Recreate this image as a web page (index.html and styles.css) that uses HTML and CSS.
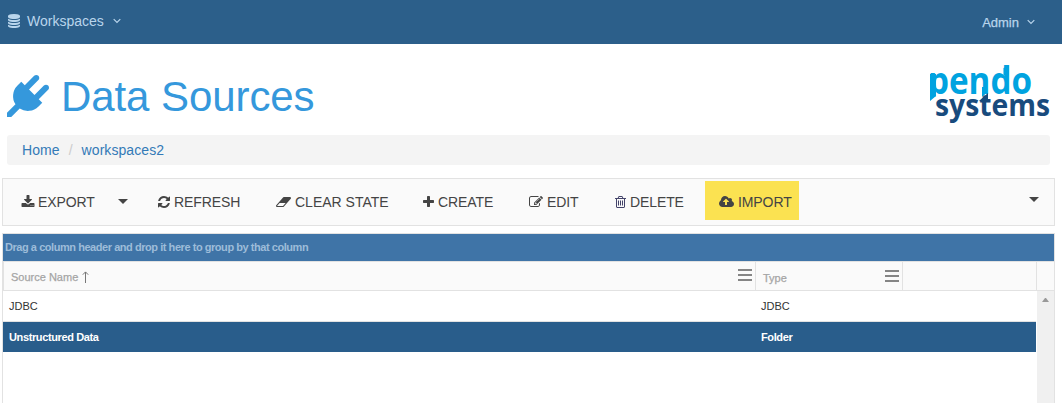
FILE: index.html
```html
<!DOCTYPE html>
<html lang="en">
<head>
<meta charset="utf-8">
<title>Data Sources</title>
<link rel="stylesheet" href="styles.css">
</head>
<body>
<nav class="navbar">
  <div class="nav-item">
    <svg class="nav-db" viewBox="128 0 1536 1792"><path d="M896 768q237 0 443-43t325-127v170q0 69-103 128t-280 93.500-385 34.500-385-34.500-280-93.500-103-128v-170q119 84 325 127t443 43zm0 768q237 0 443-43t325-127v170q0 69-103 128t-280 93.500-385 34.500-385-34.500-280-93.500-103-128v-170q119 84 325 127t443 43zm0-384q237 0 443-43t325-127v170q0 69-103 128t-280 93.500-385 34.500-385-34.500-280-93.500-103-128v-170q119 84 325 127t443 43zm0-1152q208 0 385 34.500t280 93.500 103 128v128q0 69-103 128t-280 93.500-385 34.500-385-34.500-280-93.500-103-128v-128q0-69 103-128t280-93.500 385-34.500z"/></svg>
    <span class="nav-label">Workspaces</span>
    <svg class="chevron" viewBox="0 0 8 6"><path d="M.7 1.200 4 4.500 7.300 1.200"/></svg>
  </div>
  <div class="nav-item nav-user">
    <span class="user-label">Admin</span>
    <svg class="chevron" viewBox="0 0 8 6"><path d="M.7 1.200 4 4.500 7.300 1.200"/></svg>
  </div>
</nav>
<header class="page-head">
  <h1 class="title">
    <svg class="plug" viewBox="0 0 1792 1792"><path d="M1755 453q37 38 37 90.500t-37 90.500l-401 400 150 150-160 160q-163 163-389.500 186.500t-411.500-100.500l-362 362h-181v-181l362-362q-124-185-100.500-411.500t186.500-389.500l160-160 150 150 400-401q38-37 91-37t90 37 37 90.500-37 90.500l-400 401 234 234 401-400q38-37 91-37t90 37z"/></svg>
    <span>Data Sources</span>
  </h1>
  <svg class="logo" viewBox="0 0 122 60" role="img" aria-label="pendo systems">
    <path class="logo-light" d="M1 9h6v22l-6 5zM74.500 3l5.500-2.500v10h-5.500zM53 22h4.500v6l-4.500 4z"/>
    <text class="logo-light logo-pendo" x="-1" y="28.500" textLength="104" lengthAdjust="spacingAndGlyphs">pendo</text>
    <text class="logo-dark logo-systems" x="6" y="51" textLength="115" lengthAdjust="spacingAndGlyphs">systems</text>
    <path class="logo-dark" d="M50 36l9-8v8z"/>
  </svg>
</header>
<div class="breadcrumb"><a>Home</a><span class="slash">/</span><a>workspaces2</a></div>
<div class="toolbar">
  <div class="tool export"><svg class="ico" viewBox="0 0 1792 1792"><path d="M1344 1344q0-26-19-45t-45-19-45 19-19 45 19 45 45 19 45-19 19-45zm256 0q0-26-19-45t-45-19-45 19-19 45 19 45 45 19 45-19 19-45zm128-224v320q0 40-28 68t-68 28h-1472q-40 0-68-28t-28-68v-320q0-40 28-68t68-28h465l135 136q58 56 136 56t136-56l136-136h464q40 0 68 28t28 68zm-325-569q17 41-14 70l-448 448q-18 19-45 19t-45-19l-448-448q-31-29-14-70 17-39 59-39h256v-448q0-26 19-45t45-19h256q26 0 45 19t19 45v448h256q42 0 59 39z"/></svg><span>EXPORT</span></div>
  <div class="tool more"><i class="caret"></i></div>
  <div class="tool refresh"><svg class="ico" viewBox="128 128 1536 1536"><path d="M1639 1056q0 5-1 7-64 268-268 434.500t-478 166.500q-146 0-282.500-55t-243.500-157l-129 129q-19 19-45 19t-45-19-19-45v-448q0-26 19-45t45-19h448q26 0 45 19t19 45-19 45l-137 137q71 66 161 102t187 36q134 0 250-65t186-179q11-17 53-117 8-23 30-23h192q13 0 22.500 9.500t9.500 22.500zm25-800v448q0 26-19 45t-45 19h-448q-26 0-45-19t-19-45 19-45l138-138q-148-137-349-137-134 0-250 65t-186 179q-11 17-53 117-8 23-30 23h-199q-13 0-22.500-9.500t-9.500-22.500v-7q65-268 270-434.500t480-166.500q146 0 284 55.500t245 156.500l130-129q19-19 45-19t45 19 19 45z"/></svg><span>REFRESH</span></div>
  <div class="tool clear"><svg class="ico wide" viewBox="64 0 1920 1792"><path d="M960 1408l336-384h-768l-336 384h768zm1013-1077q15 34 9.500 71.500t-30.500 65.500l-896 1024q-38 44-96 44h-768q-38 0-69.500-20.500t-47.500-54.500q-15-34-9.500-71.500t30.500-65.500l896-1024q38-44 96-44h768q38 0 69.500 20.500t47.500 54.500z"/></svg><span>CLEAR STATE</span></div>
  <div class="tool create"><svg class="ico narrow" viewBox="192 0 1408 1792"><path d="M1600 736v192q0 40-28 68t-68 28h-416v416q0 40-28 68t-68 28h-192q-40 0-68-28t-28-68v-416h-416q-40 0-68-28t-28-68v-192q0-40 28-68t68-28h416v-416q0-40 28-68t68-28h192q40 0 68 28t28 68v416h416q40 0 68 28t28 68z"/></svg><span>CREATE</span></div>
  <div class="tool edit"><svg class="ico" viewBox="0 0 1792 1792"><path d="M888 1184l116-116-152-152-116 116v56h96v96h56zm440-720q-16-16-33 1l-350 350q-17 17-1 33t33-1l350-350q17-17 1-33zm80 594v190q0 119-84.500 203.500t-203.500 84.500h-832q-119 0-203.500-84.500t-84.500-203.500v-832q0-119 84.500-203.500t203.500-84.500h832q63 0 117 25 15 7 18 23 3 17-9 29l-49 49q-14 14-32 8-23-6-45-6h-832q-66 0-113 47t-47 113v832q0 66 47 113t113 47h832q66 0 113-47t47-113v-126q0-13 9-22l64-64q15-15 35-7t20 29zm-96-738l288 288-672 672h-288v-288zm444 132l-92 92-288-288 92-92q28-28 68-28t68 28l152 152q28 28 28 68t-28 68z"/></svg><span>EDIT</span></div>
  <div class="tool delete"><svg class="ico narrow trash" viewBox="192 0 1408 1792"><path d="M704 736v576q0 14-9 23t-23 9h-64q-14 0-23-9t-9-23v-576q0-14 9-23t23-9h64q14 0 23 9t9 23zm256 0v576q0 14-9 23t-23 9h-64q-14 0-23-9t-9-23v-576q0-14 9-23t23-9h64q14 0 23 9t9 23zm256 0v576q0 14-9 23t-23 9h-64q-14 0-23-9t-9-23v-576q0-14 9-23t23-9h64q14 0 23 9t9 23zm128 724v-948h-896v948q0 22 7 40.500t14.500 27 10.500 8.500h832q3 0 10.500-8.500t14.500-27 7-40.500zm-672-1076h448l-48-117q-7-9-17-11h-317q-10 2-17 11zm928 32v64q0 14-9 23t-23 9h-96v948q0 83-47 143.500t-113 60.500h-832q-66 0-113-58.500t-47-141.500v-952h-96q-14 0-23-9t-9-23v-64q0-14 9-23t23-9h309l70-167q15-37 54-63t79-26h320q40 0 79 26t54 63l70 167h309q14 0 23 9t9 23z"/></svg><span>DELETE</span></div>
  <div class="tool import"><svg class="ico wide" viewBox="-64 0 1920 1792"><path d="M1216 864q0-14-9-23l-352-352q-9-9-23-9t-23 9l-351 351q-10 12-10 24 0 14 9 23t23 9h224v352q0 13 9.500 22.500t22.500 9.500h192q13 0 22.500-9.500t9.500-22.500v-352h224q13 0 22.500-9.500t9.500-22.500zm640 288q0 159-112.500 271.500t-271.500 112.500h-1088q-185 0-316.500-131.500t-131.500-316.500q0-130 70-240t188-165q-2-30-2-43 0-212 150-362t362-150q156 0 285.500 87t188.500 231q71-62 166-62 106 0 181 75t75 181q0 76-41 138 130 31 213.500 135.500t83.500 238.500z"/></svg><span>IMPORT</span></div>
  <i class="caret overflow"></i>
</div>
<main class="grid">
  <div class="group-bar">Drag a column header and drop it here to group by that column</div>
  <div class="cols head">
    <div class="th first"><span>Source Name</span><svg class="sort" viewBox="0 0 7 12"><path d="M3.500 12V1M.8 3.700 3.500.9l2.700 2.800"/></svg><i class="menu"></i></div>
    <div class="th type"><span>Type</span><i class="menu"></i></div>
    <div class="th"></div>
    <div class="th last"></div>
  </div>
  <div class="body">
    <div class="rows">
      <div class="cols row"><div>JDBC</div><div>JDBC</div></div>
      <div class="cols row selected"><div>Unstructured Data</div><div>Folder</div></div>
    </div>
    <div class="scroll"><i class="up"></i></div>
  </div>
</main>
</body>
</html>
```
FILE: styles.css
```css
* { box-sizing: border-box; }
body { margin: 0; height: 403px; overflow: hidden; background: #fff; font-family: "Liberation Sans", Arial, sans-serif; font-size: 14px; color: #444; }
svg { display: block; flex: none; fill: currentColor; }
.navbar { height: 44px; background: #2c5f8a; color: #b9d5ec; display: flex; justify-content: space-between; padding: 0 27px 2px 8px; }
.nav-item { display: flex; align-items: center; }
.nav-db { width: 12px; height: 14px; margin-right: 7px; }
.nav-label { margin-right: 9px; }
.chevron { width: 8px; height: 6px; fill: none; stroke: currentColor; stroke-width: 1.2; }
.nav-user { font-size: 13px; padding-top: 2px; }
.user-label { margin-right: 8px; -webkit-text-stroke: .25px currentColor; }
.page-head { height: 91px; display: flex; justify-content: space-between; padding: 21px 11px 0 7px; }
.title { margin: 0; height: 60px; display: flex; align-items: center; font-size: 42px; font-weight: 400; line-height: 48px; color: #3598dc; padding-top: 3px; }
.title span { letter-spacing: -.08px; }
.plug { width: 42px; height: 42px; margin: -1px 12px 0 0; }
.logo { width: 122px; height: 60px; overflow: visible; }
.logo-pendo, .logo-systems { font-family: "Open Sans", sans-serif; font-weight: 700; }
.logo-pendo { font-size: 37px; clip-path: inset(0 0 8px 0); }
.logo-systems { font-size: 31px; }
.logo-light { fill: #00a3e0; }
.logo-dark { fill: #184b7d; }
.breadcrumb { height: 30px; margin: 0 12px 0 7px; padding-left: 15px; background: #f4f4f4; border-radius: 3px; display: flex; align-items: center; color: #337ab7; letter-spacing: .07px; }
.slash { color: #ccc; margin: 0 9px; }
.toolbar { height: 48px; margin: 13px 7px 0 2px; border: 1px solid #e2e2e2; background: #fafafa; display: flex; align-items: center; }
.tool { flex: none; display: flex; align-items: center; white-space: nowrap; height: 39px; padding-top: 2px; margin-bottom: 3px; }
.tool span { letter-spacing: -.1px; }
.ico { width: 14px; height: 14px; margin-right: 3px; }
.refresh .ico { width: 12px; height: 12px; margin-right: 4px; }
.wide { width: 15px; margin-right: 4px; }
.narrow { width: 11px; margin-right: 4px; }
.trash { color: #44446a; }
.export { width: 97px; padding-left: 18px; }
.more { width: 55px; padding-left: 18px; }
.refresh { width: 118px; }
.clear { width: 147px; }
.clear span { letter-spacing: 0; }
.clear, .create, .edit, .delete { padding-left: 3px; }
.create { width: 106px; }
.edit { width: 86px; }
.edit .ico { margin-right: 4px; }
.delete { width: 93px; }
.refresh { padding-left: 3px; }
.import { width: 94px; padding-left: 14px; background: #fbe251; }
.caret { border: 5px solid transparent; border-top-color: #444; border-bottom: 0; }
.overflow { margin: 0 15px 6px auto; }
.grid { margin: 7px 7px 0 2px; height: 170px; border: 1px solid #e2e2e2; border-bottom: 0; font-size: 11px; }
.group-bar { height: 27px; line-height: 27px; padding-left: 2px; background: #3f74a7; color: #9dbcd9; font-weight: 700; letter-spacing: -.45px; }
.cols { display: grid; grid-template-columns: 753px 147px 134px 1fr; }
.head { height: 30px; border: solid #e2e2e2; border-width: 1px 0; background: #fafafa; color: #a5a5a5; }
.th { border-right: 1px solid #e2e2e2; display: flex; align-items: center; padding: 2px 3px 0 7px; }
.th span { -webkit-text-stroke: .25px currentColor; }
.first { border-left: 1px solid #e2e2e2; }
.th.last { border-right: 0; }
.sort { width: 7px; height: 12px; margin-left: 4px; fill: none; stroke: #777; }
.menu { width: 14px; height: 12px; margin: 0 0 5px auto; border: solid #858585; border-width: 2px 0; background: linear-gradient(#858585, #858585) center / 14px 2px no-repeat; }
.type .menu { margin-bottom: 3px; }
.type span { padding-top: 1px; }
.body { display: flex; height: 112px; }
.rows { width: 1033px; margin-right: 1px; }
.row { height: 31px; line-height: 30px; border-bottom: 1px solid #e2e2e2; grid-template-columns: 752px 147px 1fr; color: #333; }
.row div { padding-left: 6px; }
.selected { height: 30px; background: #295d8b; color: #fff; font-weight: 700; border: 0; letter-spacing: -.38px; }
.scroll { flex: 1; background: #f0f0f0; padding: 7px 0 0 5px; }
.up { display: block; width: 7px; border: 3.5px solid transparent; border-bottom: 4px solid #999; border-top: 0; }
```
